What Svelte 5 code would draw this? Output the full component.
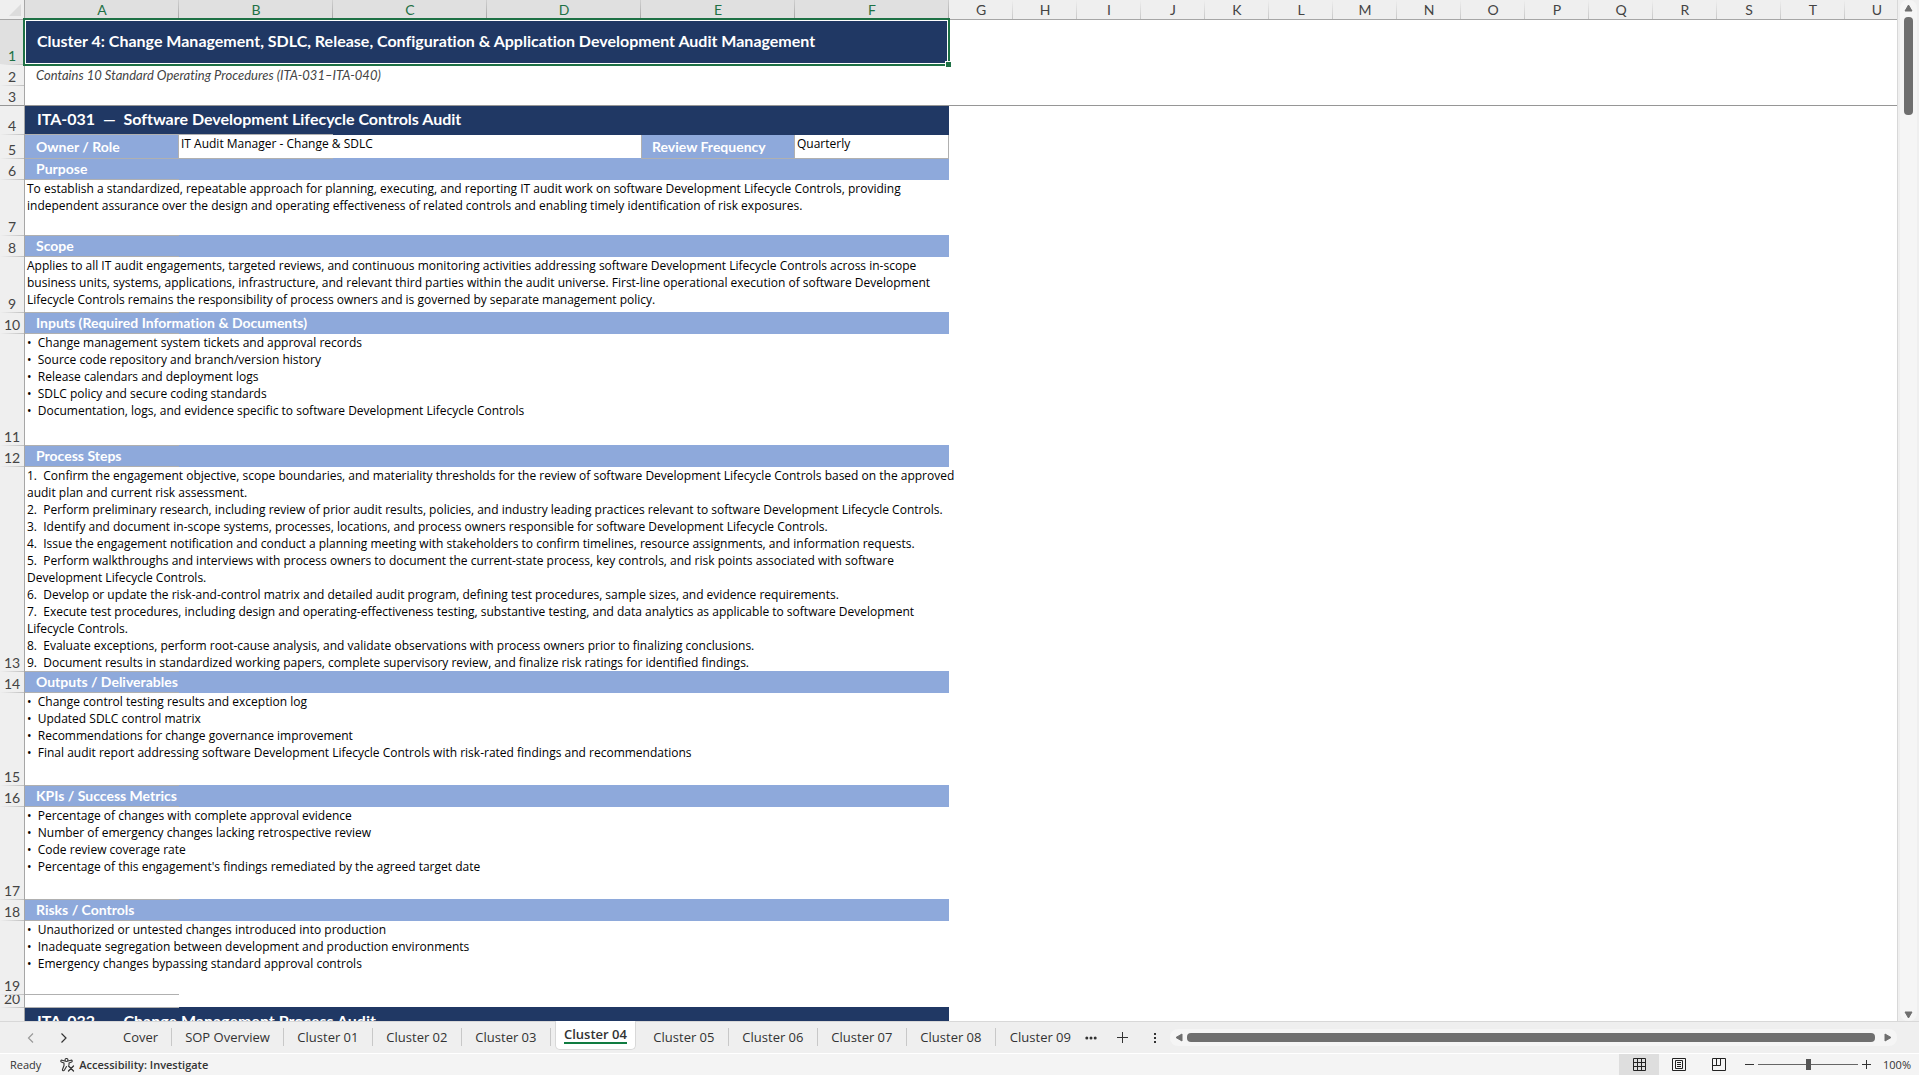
<script>
  const wideColumns = ['A', 'B', 'C', 'D', 'E', 'F'];
  const columns = 'GHIJKLMNOPQRSTU'.split('');

  const rows = [
    { n: 1, h: 45, type: 'title', text: 'Cluster 4: Change Management, SDLC, Release, Configuration & Application Development Audit Management' },
    { n: 2, h: 21, type: 'note', text: 'Contains 10 Standard Operating Procedures (ITA-031–ITA-040)' },
    { n: 3, h: 20, type: 'blank' },
    { n: 4, h: 29, type: 'sop', text: 'ITA-031  —  Software Development Lifecycle Controls Audit' },
    { n: 5, h: 24, type: 'owner' },
    { n: 6, h: 21, type: 'section', text: 'Purpose' },
    {
      n: 7, h: 56, type: 'body', lines: [
        'To establish a standardized, repeatable approach for planning, executing, and reporting IT audit work on software Development Lifecycle Controls, providing',
        'independent assurance over the design and operating effectiveness of related controls and enabling timely identification of risk exposures.'
      ]
    },
    { n: 8, h: 21, type: 'section', text: 'Scope' },
    {
      n: 9, h: 56, type: 'body', lines: [
        'Applies to all IT audit engagements, targeted reviews, and continuous monitoring activities addressing software Development Lifecycle Controls across in-scope',
        'business units, systems, applications, infrastructure, and relevant third parties within the audit universe. First-line operational execution of software Development',
        'Lifecycle Controls remains the responsibility of process owners and is governed by separate management policy.'
      ]
    },
    { n: 10, h: 21, type: 'section', text: 'Inputs (Required Information & Documents)' },
    {
      n: 11, h: 112, type: 'body', lines: [
        '•  Change management system tickets and approval records',
        '•  Source code repository and branch/version history',
        '•  Release calendars and deployment logs',
        '•  SDLC policy and secure coding standards',
        '•  Documentation, logs, and evidence specific to software Development Lifecycle Controls'
      ]
    },
    { n: 12, h: 21, type: 'section', text: 'Process Steps' },
    {
      n: 13, h: 205, type: 'body', lines: [
        '1.  Confirm the engagement objective, scope boundaries, and materiality thresholds for the review of software Development Lifecycle Controls based on the approved',
        'audit plan and current risk assessment.',
        '2.  Perform preliminary research, including review of prior audit results, policies, and industry leading practices relevant to software Development Lifecycle Controls.',
        '3.  Identify and document in-scope systems, processes, locations, and process owners responsible for software Development Lifecycle Controls.',
        '4.  Issue the engagement notification and conduct a planning meeting with stakeholders to confirm timelines, resource assignments, and information requests.',
        '5.  Perform walkthroughs and interviews with process owners to document the current-state process, key controls, and risk points associated with software',
        'Development Lifecycle Controls.',
        '6.  Develop or update the risk-and-control matrix and detailed audit program, defining test procedures, sample sizes, and evidence requirements.',
        '7.  Execute test procedures, including design and operating-effectiveness testing, substantive testing, and data analytics as applicable to software Development',
        'Lifecycle Controls.',
        '8.  Evaluate exceptions, perform root-cause analysis, and validate observations with process owners prior to finalizing conclusions.',
        '9.  Document results in standardized working papers, complete supervisory review, and finalize risk ratings for identified findings.'
      ]
    },
    { n: 14, h: 21, type: 'section', text: 'Outputs / Deliverables' },
    {
      n: 15, h: 93, type: 'body', lines: [
        '•  Change control testing results and exception log',
        '•  Updated SDLC control matrix',
        '•  Recommendations for change governance improvement',
        '•  Final audit report addressing software Development Lifecycle Controls with risk-rated findings and recommendations'
      ]
    },
    { n: 16, h: 21, type: 'section', text: 'KPIs / Success Metrics' },
    {
      n: 17, h: 93, type: 'body', lines: [
        '•  Percentage of changes with complete approval evidence',
        '•  Number of emergency changes lacking retrospective review',
        '•  Code review coverage rate',
        "•  Percentage of this engagement's findings remediated by the agreed target date"
      ]
    },
    { n: 18, h: 21, type: 'section', text: 'Risks / Controls' },
    {
      n: 19, h: 74, type: 'body last', lines: [
        '•  Unauthorized or untested changes introduced into production',
        '•  Inadequate segregation between development and production environments',
        '•  Emergency changes bypassing standard approval controls'
      ]
    },
    { n: 20, h: 13, type: 'gap' },
    { n: 21, h: 29, type: 'sop', text: 'ITA-032  —  Change Management Process Audit' }
  ];

  const tabs = [
    'Cover', 'SOP Overview', 'Cluster 01', 'Cluster 02', 'Cluster 03', 'Cluster 04',
    'Cluster 05', 'Cluster 06', 'Cluster 07', 'Cluster 08', 'Cluster 09'
  ];

  let activeTab = $state('Cluster 04');
  let zoom = $state(100);
</script>

<div class="app">
  <main class="workspace">
    <div class="sheet">
      <table>
        <colgroup>
          <col class="gutter" />
          {#each wideColumns as c (c)}<col class="wide" />{/each}
          {#each columns as c (c)}<col class="narrow" />{/each}
        </colgroup>
        <thead>
          <tr>
            <th class="corner">
              <svg width="12" height="12" viewBox="0 0 12 12"><path d="M12 0v12H0z" fill="#dcdcdc" /></svg>
            </th>
            {#each wideColumns as c (c)}<th class="selected" scope="col">{c}</th>{/each}
            {#each columns as c (c)}<th scope="col">{c}</th>{/each}
          </tr>
        </thead>
        <tbody>
          {#each rows as row (row.n)}
            <tr class:frozen={row.n === 3}>
              <th class="number" class:selected={row.n === 1} scope="row">
                <div style="height: {row.h}px">{row.n}</div>
              </th>
              {#if row.type === 'owner'}
                <td class="label">Owner / Role</td>
                <td class="value owner" colspan="3">IT Audit Manager - Change &amp; SDLC</td>
                <td class="label review">Review Frequency</td>
                <td class="value frequency">Quarterly</td>
              {:else if row.lines}
                <td class={row.type} colspan="6">{row.lines.join('\n')}</td>
              {:else if row.type === 'title'}
                <td class="title" colspan="6">{row.text}<span class="selection"></span></td>
              {:else}
                <td class={row.type} colspan="6">{row.text ?? ''}</td>
              {/if}
              <td class="rest" colspan="15"></td>
            </tr>
          {/each}
        </tbody>
      </table>
    </div>

    <div class="vscroll">
      <svg width="9" height="8" viewBox="0 0 9 8"><path d="M4.500 1 8 7H1z" fill="#6f6f6f" stroke="#6f6f6f" stroke-linejoin="round" /></svg>
      <div class="vthumb"></div>
      <svg class="down" width="9" height="8" viewBox="0 0 9 8"><path d="M4.500 7 8 1H1z" fill="#6f6f6f" stroke="#6f6f6f" stroke-linejoin="round" /></svg>
    </div>
  </main>

  <nav class="tabbar" aria-label="Sheets">
    <div class="arrows">
      <button aria-label="Previous sheet">
        <svg width="8" height="10" viewBox="0 0 8 10"><path d="M6 .5 1.500 5 6 9.500" fill="none" stroke="#9a9a9a" stroke-width="1.200" /></svg>
      </button>
      <button aria-label="Next sheet">
        <svg width="8" height="10" viewBox="0 0 8 10"><path d="M1.500.5 6 5 1.500 9.500" fill="none" stroke="#333" stroke-width="1.200" /></svg>
      </button>
    </div>
    <div class="tabs">
      {#each tabs as tab (tab)}
        <button class="tab" class:active={tab === activeTab} onclick={() => (activeTab = tab)}>
          <span>{tab}</span>
        </button>
      {/each}
    </div>
    <button class="more" aria-label="More sheets">
      <svg width="12" height="4" viewBox="0 0 12 4" fill="#333"><circle cx="1.800" cy="2" r="1.500" /><circle cx="6" cy="2" r="1.500" /><circle cx="10.200" cy="2" r="1.500" /></svg>
    </button>
    <button class="add" aria-label="New sheet">
      <svg width="11" height="11" viewBox="0 0 11 11"><path d="M5.500 0v11M0 5.500h11" stroke="#333" /></svg>
    </button>
    <div class="grip">
      <svg width="2" height="10" viewBox="0 0 2 10" fill="#333"><path d="M0 0h2v2H0zM0 4h2v2H0zM0 8h2v2H0z" /></svg>
    </div>
    <div class="hscroll">
      <svg width="8" height="9" viewBox="0 0 8 9"><path d="M1 4.500 7 1v7z" fill="#6f6f6f" stroke="#6f6f6f" stroke-linejoin="round" /></svg>
      <div class="hthumb"></div>
      <svg width="8" height="9" viewBox="0 0 8 9"><path d="M7 4.500 1 1v7z" fill="#6f6f6f" stroke="#6f6f6f" stroke-linejoin="round" /></svg>
    </div>
  </nav>

  <footer class="status">
    <span class="ready">Ready</span>
    <button class="access">
      <svg width="15" height="14" viewBox="0 0 15 14" fill="none" stroke="#333" stroke-width="1.100" stroke-linecap="round" stroke-linejoin="round">
        <circle cx="6.500" cy="2" r="1.500" />
        <path d="M5 3 2 2.200C.8 2 .4 3.400 1.400 3.900L4 5v2.500l-1.500 4c-.3 1.200 1.200 1.700 1.800.7L6.500 8.500M8 3l3-.8c1.200-.2 1.600 1.200.6 1.700L9 5v2" />
        <path d="m8.500 8 5 5M13.500 8l-5 5" stroke-width="1.300" />
      </svg>
      <span>Accessibility: Investigate</span>
    </button>
    <div class="views">
      <button class="on" aria-label="Normal view">
        <svg width="13" height="13" viewBox="0 0 13 13"><path d="M.5.5h12v12H.5zM4.500 0v13M8.500 0v13M0 4.500h13M0 8.500h13" fill="none" stroke="#222" /></svg>
      </button>
      <button aria-label="Page layout">
        <svg width="14" height="13" viewBox="0 0 14 13"><path d="M.5.5h13v12H.5zM3.500 2.500h7v8h-7zM5 4.500h4M5 6.500h4M5 8.500h4" fill="none" stroke="#222" /></svg>
      </button>
      <button aria-label="Page break preview">
        <svg width="14" height="13" viewBox="0 0 14 13"><path d="M.5.5h13v12H.5zM.5 7.500h8M4.500.5v7M8.500.5v7" fill="none" stroke="#222" /></svg>
      </button>
    </div>
    <div class="zoom">
      <button aria-label="Zoom out"><svg width="9" height="9" viewBox="0 0 9 9"><path d="M0 4.500h9" stroke="#333" /></svg></button>
      <input type="range" min="0" max="200" bind:value={zoom} aria-label="Zoom" />
      <button aria-label="Zoom in"><svg width="9" height="9" viewBox="0 0 9 9"><path d="M0 4.500h9M4.500 0v9" stroke="#333" /></svg></button>
      <span>{zoom}%</span>
    </div>
  </footer>
</div>

<style>
  :global(body) {
    overflow: hidden;
  }

  .app {
    display: flex;
    flex-direction: column;
    height: 100vh;
    background: #efefef;
    color: #333;
    font-family: 'Open Sans', 'Noto Sans', sans-serif;
    font-size: 13px;
  }

  button {
    display: flex;
    align-items: center;
    justify-content: center;
    padding: 0;
    border: 0;
    background: none;
    color: inherit;
    font: inherit;
  }

  .workspace {
    flex: 1;
    display: flex;
    min-height: 0;
  }

  .sheet {
    flex: 1;
    min-width: 0;
    overflow: hidden;
    border-right: 1px solid #d8d8d8;
    background: #fff;
    font-family: Lato, 'Liberation Sans', sans-serif;
    font-variant-ligatures: none;
  }

  table {
    width: 1909px;
    table-layout: fixed;
    border-collapse: separate;
    border-spacing: 0;
  }

  .gutter {
    width: 25px;
  }

  .wide {
    width: 154px;
  }

  .narrow {
    width: 64px;
  }

  th,
  td {
    box-sizing: border-box;
    padding: 0;
  }

  thead th {
    height: 20px;
    border-bottom: 1px solid #a6a6a6;
    background: linear-gradient(#efefef, #c8c8c8) 100% 0 / 1px 100% no-repeat #efefef;
    color: #444;
    font-size: 14px;
    font-weight: 400;
    line-height: 18px;
  }

  thead th.selected {
    background: linear-gradient(#d0d0d0, #a6a6a6) 100% 0 / 1px 100% no-repeat #e0e0e0;
    color: #1e7145;
  }

  thead .corner {
    padding-right: 3px;
    border-right: 1px solid #a6a6a6;
    background: #efefef;
    line-height: 0;
    text-align: right;
  }

  .number {
    border-right: 1px solid #a6a6a6;
    background: linear-gradient(90deg, #efefef, #c0c0c0) 0 100% / 100% 1px no-repeat #efefef;
    color: #444;
    font-size: 14px;
    font-weight: 400;
  }

  .number.selected {
    background-color: #e0e0e0;
    color: #1e7145;
  }

  .number div {
    display: flex;
    align-items: flex-end;
    justify-content: center;
    overflow: hidden;
    line-height: 19px;
  }

  .frozen th,
  .frozen td {
    border-bottom: 1px solid #969696;
  }

  .frozen .number {
    background: #efefef;
  }

  .frozen .number div {
    margin-bottom: -1px;
  }

  td {
    white-space: pre;
  }

  .title {
    position: relative;
    padding: 0 0 4px 12px;
    background: #203864;
    color: #fff;
    font-size: 16px;
    font-weight: 700;
    line-height: 20px;
  }

  .selection {
    position: absolute;
    inset: -2px -1px -1px -2px;
    border: 2px solid #1e7145;
    box-shadow: inset 0 0 0 1px #fff;
  }

  .selection::after {
    content: '';
    position: absolute;
    right: -3px;
    bottom: -3px;
    width: 5px;
    height: 5px;
    border: solid #fff;
    border-width: 1px 0 0 1px;
    background: #1e7145;
  }

  .note {
    padding-left: 11px;
    color: #444;
    font-size: 13px;
    font-style: italic;
    line-height: 20px;
    vertical-align: top;
  }

  .sop {
    padding: 0 0 4px 12px;
    background: linear-gradient(#b0b0b0, #b0b0b0) 0 100% / 308px 1px no-repeat #203864;
    color: #fff;
    font-size: 16px;
    font-weight: 700;
    line-height: 20px;
  }

  .section,
  .label {
    padding-left: 11px;
    background: linear-gradient(#b0b0b0, #b0b0b0) 0 100% / 154px 1px no-repeat #8ea9db;
    color: #fff;
    font-size: 14px;
    font-weight: 700;
    line-height: 18px;
  }

  .section {
    padding-bottom: 2px;
  }

  .label {
    border-right: 1px solid #b0b0b0;
  }

  .label.review {
    padding-left: 10px;
    border-left: 1px solid #b0b0b0;
  }

  .body,
  .value {
    padding-left: 2px;
    color: #000;
    font-family: 'Open Sans', 'Noto Sans', sans-serif;
    font-size: 12px;
    line-height: 17px;
    vertical-align: top;
  }

  .body {
    background:
      linear-gradient(#b0b0b0, #b0b0b0) 0 100% / 154px 1px no-repeat,
      linear-gradient(#8ea9db, #8ea9db) 0 100% / 100% 1px no-repeat;
  }

  .body.last {
    background: linear-gradient(#b0b0b0, #b0b0b0) 0 100% / 154px 1px no-repeat;
  }

  .gap {
    background:
      linear-gradient(#b0b0b0, #b0b0b0) 0 100% / 154px 1px no-repeat,
      linear-gradient(#203864, #203864) 0 100% / 100% 1px no-repeat;
  }

  .owner {
    background:
      linear-gradient(#b0b0b0, #b0b0b0) 0 100% / 154px 1px no-repeat,
      linear-gradient(#8ea9db, #8ea9db) 0 100% / 100% 1px no-repeat;
  }

  .frequency {
    border-right: 1px solid #b0b0b0;
    border-bottom: 1px solid #b0b0b0;
  }

  .vscroll {
    display: flex;
    flex-direction: column;
    align-items: center;
    width: 17px;
    margin: 0 2px;
    padding: 4px 0 2px;
    box-sizing: border-box;
    border-radius: 8px;
    background: #f5f5f5;
  }

  .vthumb {
    width: 9px;
    height: 98px;
    margin-top: 5px;
    border-radius: 4px;
    background: #6f6f6f;
  }

  .down {
    margin-top: auto;
  }

  .tabbar {
    display: flex;
    align-items: center;
    height: 32px;
    box-sizing: border-box;
    border-top: 1px solid #d8d8d8;
  }

  .arrows {
    display: flex;
    gap: 25px;
    padding: 0 42px 0 27px;
  }

  .tabs {
    align-self: stretch;
    display: flex;
    align-items: center;
    padding-bottom: 2px;
  }

  .tab {
    box-sizing: border-box;
    height: 18px;
    padding: 0 13px;
    border-right: 1px solid #c8c8c8;
    line-height: 16px;
    white-space: nowrap;
  }

  .tab:nth-child(n + 3) {
    min-width: 89px;
  }

  .tab:last-child {
    border-right: 0;
  }

  .tab.active {
    align-self: flex-start;
    min-width: 81px;
    height: 29px;
    margin: -1px 4px 0;
    padding: 0 7px;
    border: 1px solid #d8d8d8;
    border-top: 0;
    border-radius: 0 0 5px 5px;
    background: #fff;
    font-weight: 600;
  }

  .tab.active span {
    border-bottom: 2px solid #107c41;
  }

  .more {
    margin-right: 20px;
  }

  .add {
    margin-right: 26px;
  }

  .grip {
    display: flex;
    margin-right: 14px;
  }

  .hscroll {
    flex: 1;
    display: flex;
    align-items: center;
    gap: 4px;
    height: 17px;
    margin-right: 22px;
    padding: 0 5px;
    border-radius: 8px;
    background: #f5f5f5;
  }

  .hthumb {
    flex: 1;
    height: 9px;
    margin-right: 5px;
    border-radius: 4px;
    background: #6f6f6f;
  }

  .status {
    display: flex;
    align-items: center;
    height: 22px;
    box-sizing: border-box;
    border-top: 1px solid #fff;
    background: #f4f4f4;
    font-size: 11px;
  }

  .ready {
    padding: 0 19px 0 10px;
  }

  .access {
    gap: 4px;
    font-weight: 600;
  }

  .views {
    display: flex;
    align-self: stretch;
    margin-left: auto;
  }

  .views button {
    width: 40px;
  }

  .views .on {
    background: #dedede;
  }

  .zoom {
    display: flex;
    align-items: center;
    margin: 0 8px 0 6px;
  }

  .zoom span {
    width: 28px;
    margin-left: 12px;
    text-align: right;
  }

  input {
    appearance: none;
    width: 100px;
    height: 11px;
    margin: 0 4px;
    background: linear-gradient(#666, #666) 0 50% / 100% 1px no-repeat;
  }

  input::-webkit-slider-thumb {
    appearance: none;
    width: 5px;
    height: 11px;
    background: #555;
  }
</style>
